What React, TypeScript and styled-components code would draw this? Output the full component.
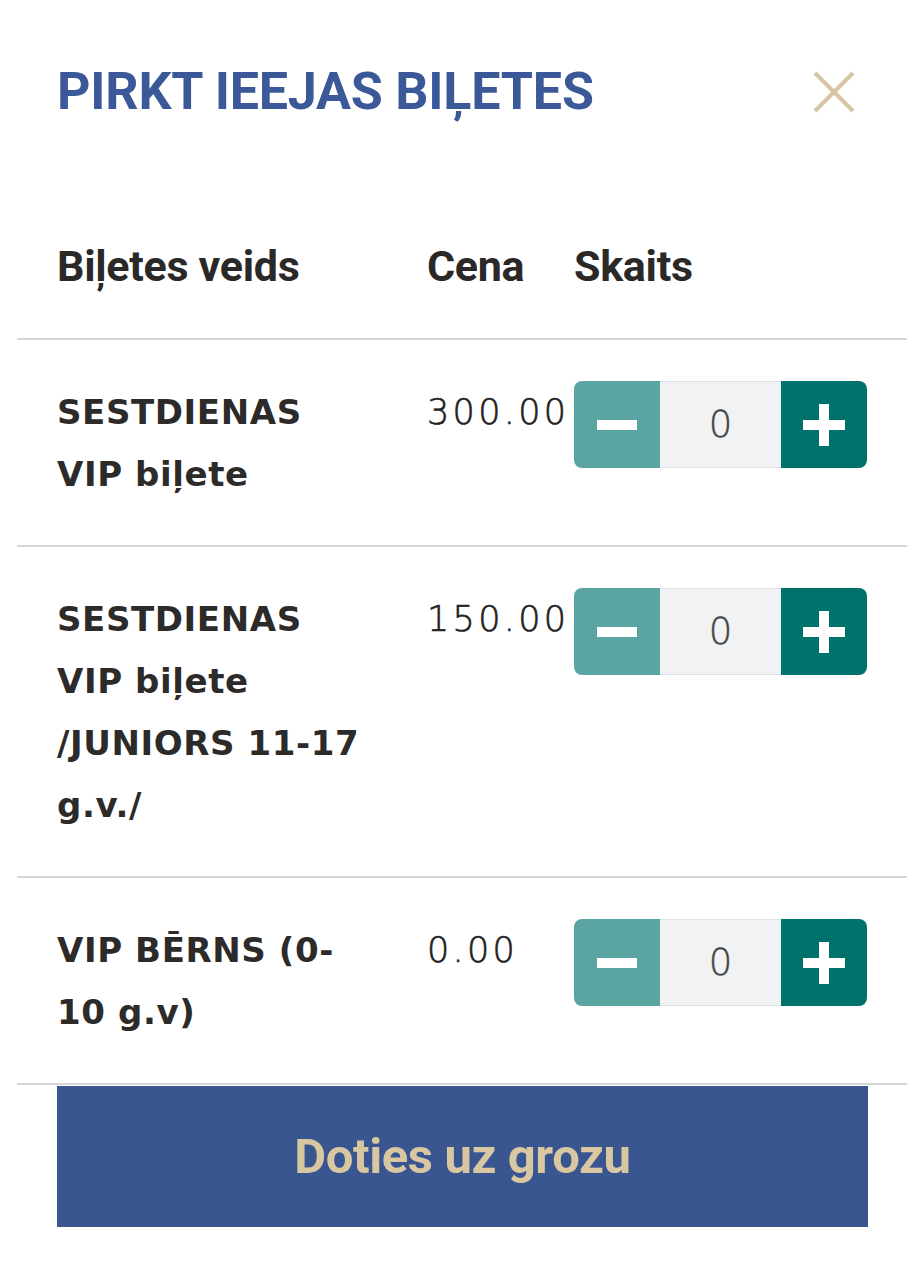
import React from "react";
import styled, { createGlobalStyle } from "styled-components";

const Global = createGlobalStyle`
  html, body { margin: 0; padding: 0; background: #ffffff; }
  * { box-sizing: border-box; }
`;

const Page = styled.div`
  width: 924px;
  padding: 0 57px 0 57px;
  background: #fff;
`;

const Header = styled.div`
  display: flex;
  align-items: center;
  justify-content: space-between;
  padding-top: 62px;
  height: 122px;
`;

const Title = styled.h1`
  margin: 0;
  font-family: Roboto, "Liberation Sans", sans-serif;
  font-weight: 700;
  font-size: 52px;
  line-height: 60px;
  color: #3b5998;
  letter-spacing: -0.2px;
`;

const Close = styled.button`
  border: 0;
  background: none;
  padding: 0;
  margin-right: 11px;
  width: 44px;
  height: 44px;
  cursor: pointer;
  display: flex;
`;

const Table = styled.div`
  margin: 0 -40px;
`;

const Grid = styled.div`
  display: grid;
  grid-template-columns: 370px 147px 293px;
  padding: 0 40px;
`;

const HeadRow = styled(Grid)`
  padding-top: 119px;
  padding-bottom: 47px;
  border-bottom: 2px solid #d6d6d6;
`;

const HeadCell = styled.div`
  font-family: Roboto, "Liberation Sans", sans-serif;
  font-weight: 700;
  font-size: 43px;
  line-height: 50px;
  color: #2b2828;
  letter-spacing: -0.3px;
`;

const Row = styled(Grid)`
  padding-top: 41px;
  padding-bottom: 40px;
  border-bottom: 2px solid #d6d6d6;
`;

const Name = styled.div`
  font-family: "DejaVu Sans", "Open Sans", sans-serif;
  font-weight: 700;
  font-size: 34px;
  line-height: 62px;
  color: #2d2a2a;
  padding-right: 56px;
  letter-spacing: 0.6px;
`;

const Price = styled.div`
  font-family: "DejaVu Sans", "Open Sans", sans-serif;
  font-weight: 200;
  font-size: 35px;
  line-height: 62px;
  color: #222;
  letter-spacing: 3.3px;
  white-space: nowrap;
  -webkit-text-stroke: 0.6px #222;
`;

const Stepper = styled.div`
  display: flex;
  height: 87px;
  border-radius: 8px;
  overflow: hidden;
`;

const StepBtn = styled.button<{ $dark?: boolean }>`
  width: 86px;
  border: 0;
  padding: 0;
  display: flex;
  align-items: center;
  justify-content: center;
  background: ${(p) => (p.$dark ? "#00726c" : "#5aa5a2")};
  cursor: pointer;
`;

const Count = styled.div`
  flex: 1;
  display: flex;
  align-items: center;
  justify-content: center;
  background: #f0f2f4;
  border-top: 1px solid #dfe3e6;
  border-bottom: 1px solid #dfe3e6;
  font-family: "DejaVu Sans", "Open Sans", sans-serif;
  font-weight: 200;
  font-size: 37px;
  color: #444;
  -webkit-text-stroke: 0.4px #444;
`;

const CartButton = styled.button`
  display: block;
  width: 811px;
  height: 141px;
  margin-top: 1px;
  border: 0;
  background: #3a5690;
  color: #d9c7a1;
  font-family: Roboto, "Liberation Sans", sans-serif;
  font-weight: 700;
  font-size: 49px;
  letter-spacing: -0.4px;
  cursor: pointer;
`;

const Minus = () => (
  <svg width="40" height="40" viewBox="0 0 40 40">
    <rect x="0" y="15" width="40" height="10" fill="#fff" />
  </svg>
);

const Plus = () => (
  <svg width="42" height="42" viewBox="0 0 42 42">
    <rect x="0" y="16" width="42" height="10" fill="#fff" />
    <rect x="16" y="0" width="10" height="42" fill="#fff" />
  </svg>
);

const tickets = [
  { name: "SESTDIENAS VIP biļete", price: "300.00" },
  { name: "SESTDIENAS VIP biļete /JUNIORS 11-17 g.v./", price: "150.00" },
  { name: "VIP BĒRNS (0-10 g.v)", price: "0.00" },
];

export default function App() {
  return (
    <Page>
      <Global />
      <Header>
        <Title>PIRKT IEEJAS BIĻETES</Title>
        <Close aria-label="Aizvērt">
          <svg width="44" height="44" viewBox="0 0 44 44">
            <path d="M3 3 L41 41 M41 3 L3 41" stroke="#d6c6a2" strokeWidth="4" fill="none" />
          </svg>
        </Close>
      </Header>
      <Table>
        <HeadRow>
          <HeadCell>Biļetes veids</HeadCell>
          <HeadCell>Cena</HeadCell>
          <HeadCell>Skaits</HeadCell>
        </HeadRow>
        {tickets.map((t) => (
          <Row key={t.name + t.price}>
            <Name>{t.name}</Name>
            <Price>{t.price}</Price>
            <Stepper>
              <StepBtn aria-label="Mazāk">
                <Minus />
              </StepBtn>
              <Count>0</Count>
              <StepBtn $dark aria-label="Vairāk">
                <Plus />
              </StepBtn>
            </Stepper>
          </Row>
        ))}
      </Table>
      <CartButton>Doties uz grozu</CartButton>
    </Page>
  );
}
